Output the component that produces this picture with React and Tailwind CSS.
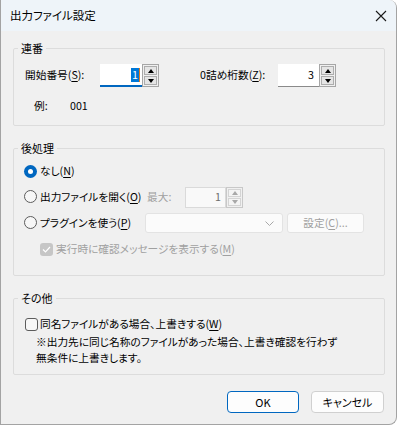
import React from 'react';

const font = "[font-family:'Noto_Sans_CJK_JP','Noto_Sans',sans-serif] [font-feature-settings:'palt']";

const Mn = ({ children }) => <span className="underline underline-offset-[2px]">{children}</span>;

const Arrow = ({ up, disabled }) => (
    <div
        className={`w-0 h-0 border-x-[3.5px] border-x-transparent ${
            up
                ? disabled ? 'border-b-[4px] border-b-[#a8a8a8]' : 'border-b-[4px] border-b-black'
                : disabled ? 'border-t-[4px] border-t-[#a8a8a8]' : 'border-t-[4px] border-t-black'
        }`}
    />
);

const Spinner = ({ disabled, tall }) => (
    <div className={`flex flex-col gap-px p-px border ${disabled ? 'border-[#c8c8c8]' : 'border-[#a6a6a6]'} ${tall ? 'h-[23px]' : 'h-[21px]'} w-[17px]`}>
        <div className={`flex-1 flex items-center justify-center border ${disabled ? 'border-[#d4d4d4] bg-[#f4f4f4]' : 'border-[#adadad] bg-[#e5e5e5]'}`}>
            <Arrow up disabled={disabled} />
        </div>
        <div className={`flex-1 flex items-center justify-center border ${disabled ? 'border-[#d4d4d4] bg-[#f4f4f4]' : 'border-[#adadad] bg-[#e5e5e5]'}`}>
            <Arrow disabled={disabled} />
        </div>
    </div>
);

const Radio = ({ checked }) =>
    checked ? (
        <div className="w-[13px] h-[13px] rounded-full bg-[#0067c0] flex items-center justify-center">
            <div className="w-[5px] h-[5px] rounded-full bg-white" />
        </div>
    ) : (
        <div className="w-[13px] h-[13px] rounded-full border border-[#5c5c5c] bg-[#f7f7f7]" />
    );

const Group = ({ title, className, children }) => (
    <fieldset className={`ml-[12px] mr-[11px] border border-[#dcdcdc] rounded-[2px] ${className}`}>
        <legend className="ml-[4px] px-[3px] leading-[16px] text-[11px]">{title}</legend>
        {children}
    </fieldset>
);

export default function App() {
    return (
        <div className={`w-[397px] h-[425px] bg-[#f0f0f0] border-x border-b border-[#a3a3a3] rounded-tr-[8px] rounded-br-[8px] overflow-hidden flex flex-col text-[10.7px] text-black ${font}`}>
            {/* title bar */}
            <div className="h-[31px] bg-[#eef4f9] flex items-center justify-between pl-[9px] pr-[8px] shrink-0">
                <span className="text-[11.5px]">出力ファイル設定</span>
                <svg width="12" height="12" viewBox="0 0 12 12" className="mr-[1px]">
                    <path d="M1 1 L11 11 M11 1 L1 11" stroke="#1a1a1a" strokeWidth="1.1" fill="none" />
                </svg>
            </div>

            {/* 連番 */}
            <Group title="連番" className="mt-[9px] pb-[11px]">
                <div className="pl-[11px] pt-[8px] flex items-center">
                    <span className="w-[75px]">開始番号(<Mn>S</Mn>):</span>
                    <div className="w-[42px] h-[23px] bg-white border-b-2 border-[#0067c0] flex items-center justify-end pr-[2px]">
                        <span className="bg-[#0078d7] text-white leading-[14px] px-[1px]">1</span>
                        <span className="w-px h-[14px] bg-[#e07a1f]" />
                    </div>
                    <Spinner tall />
                    <span className="ml-[41px] w-[78px]">0詰め桁数(<Mn>Z</Mn>):</span>
                    <div className="w-[41px] h-[23px] bg-white border-b border-[#8a8a8a] flex items-center justify-end pr-[5px]">
                        3
                    </div>
                    <Spinner tall />
                </div>
                <div className="pl-[20px] mt-[11px] flex items-center leading-[16px]">
                    <span className="w-[36px]">例:</span>
                    <span>001</span>
                </div>
            </Group>

            {/* 後処理 */}
            <Group title="後処理" className="mt-[14px] pt-[2px] pb-[13px]">
                <div className="pl-[10px] flex flex-col">
                    <div className="h-[26px] flex items-center gap-[3px]">
                        <Radio checked />
                        <span>なし(<Mn>N</Mn>)</span>
                    </div>
                    <div className="h-[26px] flex items-center">
                        <div className="w-[123px] flex items-center gap-[3px]">
                            <Radio />
                            <span>出力ファイルを開く(<Mn>O</Mn>)</span>
                        </div>
                        <span className="w-[38px] text-[#a0a0a0]">最大:</span>
                        <div className="w-[41px] h-[21px] border border-[#dadada] bg-[#f9f9f9] flex items-center justify-end pr-[4px] text-[#6d6d6d]">
                            1
                        </div>
                        <Spinner disabled />
                    </div>
                    <div className="h-[26px] flex items-center">
                        <div className="w-[121px] flex items-center gap-[3px]">
                            <Radio />
                            <span>プラグインを使う(<Mn>P</Mn>)</span>
                        </div>
                        <div className="w-[138px] h-[20px] border border-[#e3e3e3] bg-[#fbfbfb] rounded-[3px] flex items-center justify-end pr-[8px]">
                            <svg width="9" height="5" viewBox="0 0 9 5">
                                <path d="M0.5 0.5 L4.5 4.5 L8.5 0.5" stroke="#a8a8a8" fill="none" />
                            </svg>
                        </div>
                        <div className="ml-[4px] w-[77px] h-[20px] border border-[#e3e3e3] bg-[#fbfbfb] rounded-[3px] flex items-center justify-center text-[#a0a0a0]">
                            設定(<Mn>C</Mn>)...
                        </div>
                    </div>
                    <div className="h-[26px] flex items-center gap-[3px] pl-[16px] text-[#a0a0a0]">
                        <div className="w-[13px] h-[13px] rounded-[3px] bg-[#c6c6c6] flex items-center justify-center">
                            <svg width="9" height="7" viewBox="0 0 9 7">
                                <path d="M1 3.5 L3.5 6 L8 1" stroke="white" strokeWidth="1.2" fill="none" />
                            </svg>
                        </div>
                        <span>実行時に確認メッセージを表示する(<Mn>M</Mn>)</span>
                    </div>
                </div>
            </Group>

            {/* その他 */}
            <Group title="その他" className="mt-[14px] pb-[8px]">
                <div className="pl-[11px] pt-[8px]">
                    <div className="h-[20px] flex items-center gap-[2px]">
                        <div className="w-[13px] h-[13px] rounded-[3px] border border-[#5c5c5c] bg-[#f7f7f7]" />
                        <span>同名ファイルがある場合、上書きする(<Mn>W</Mn>)</span>
                    </div>
                    <div className="pl-[11px] leading-[16px]">
                        <div>※出力先に同じ名称のファイルがあった場合、上書き確認を行わず</div>
                        <div>無条件に上書きします。</div>
                    </div>
                </div>
            </Group>

            {/* buttons */}
            <div className="mt-[16px] flex justify-end gap-[12px] pr-[12px]">
                <button className="w-[72px] h-[22px] rounded-[4px] border border-[#0067c0] bg-[#fdfdfd] text-[11px]">OK</button>
                <button className="w-[73px] h-[22px] rounded-[4px] border border-[#d0d0d0] bg-[#fdfdfd] text-[11px]">キャンセル</button>
            </div>
        </div>
    );
}
